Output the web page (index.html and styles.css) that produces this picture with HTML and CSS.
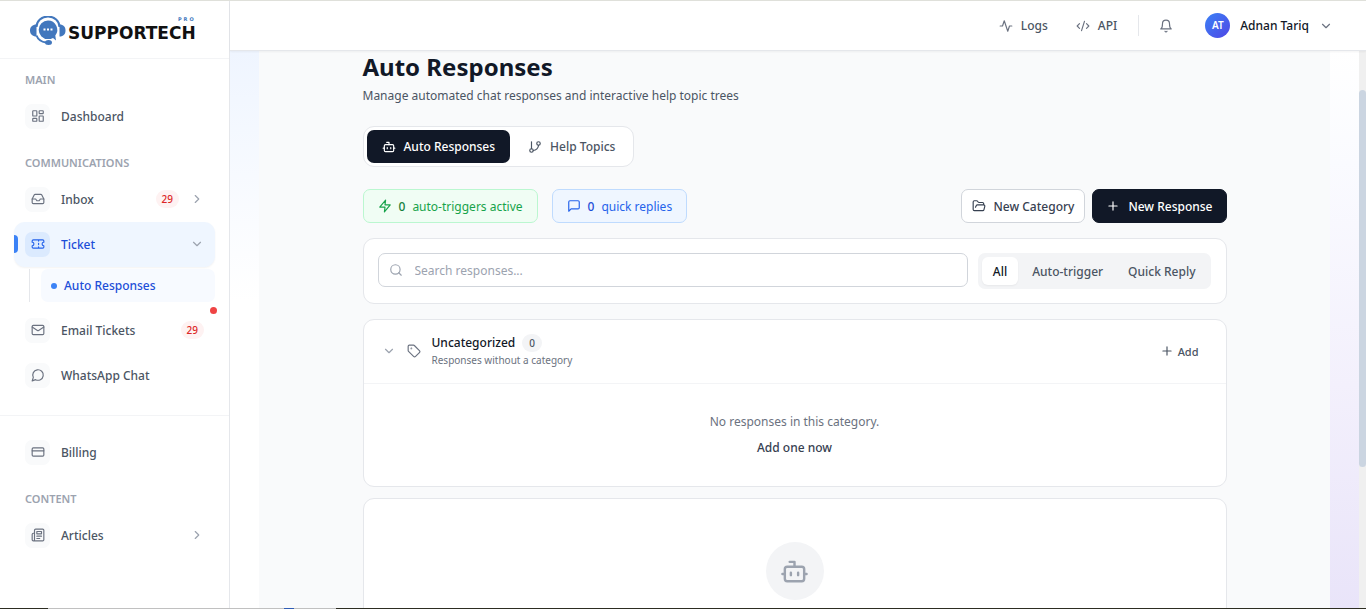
FILE: index.html
```
<!DOCTYPE html>
<html lang="en">
<head>
    <meta charset="UTF-8">
    <meta name="viewport" content="width=device-width, initial-scale=1.0">
    <title>Supportech Pro - Auto Responses</title>
    <link rel="stylesheet" href="styles.css">
</head>
<body>
    <div class="app">
        <aside class="sidebar">
            <a href="#" class="logo">
                <svg width="36" height="30" viewBox="0 0 36 30">
                    <path d="M6.500 11A11.500 10.500 0 0 1 29.500 11" fill="none" stroke="#4277bd" stroke-width="2"/>
                    <path d="M6.500 8.500C2.500 8.500 0 11 0 14.500s2.500 6 6.500 6zM29.500 8.500c4 0 6 2.500 6 6s-2 6-6 6z" fill="#4277bd"/>
                    <path d="M6.500 19.500C8 23.500 12 26 16 26.500" fill="none" stroke="#4277bd" stroke-width="2"/>
                    <ellipse cx="18.500" cy="26.500" rx="3.500" ry="2.500" fill="#4277bd"/>
                    <path d="M18 4.500a9.300 9.300 0 1 0 0 18.600c2 0 3.500-.400 5-1.200l3 2.600-.700-5A9.300 9.300 0 0 0 18 4.500z" fill="#4277bd"/>
                    <path d="M13.500 12.500h2v2h-2zM17 12.500h2v2h-2zM20.500 12.500h2v2h-2z" fill="#fff"/>
                </svg>
                <span class="logo-text">SUPPORTECH<small>PRO</small></span>
            </a>
            <nav class="menu">
                <h2>Main</h2>
                <a href="#" class="item">
                    <span class="icon"><svg class="i" viewBox="0 0 24 24"><rect x="3" y="3" width="7" height="9" rx="1"/><rect x="14" y="3" width="7" height="5" rx="1"/><rect x="14" y="12" width="7" height="9" rx="1"/><rect x="3" y="16" width="7" height="5" rx="1"/></svg></span>
                    <span class="label">Dashboard</span>
                </a>
                <h2>Communications</h2>
                <a href="#" class="item">
                    <span class="icon"><svg class="i" viewBox="0 0 24 24"><path d="M22 12h-6l-2 3h-4l-2-3H2"/><path d="M5.450 5.110 2 12v6a2 2 0 0 0 2 2h16a2 2 0 0 0 2-2v-6l-3.450-6.890A2 2 0 0 0 16.760 4H7.240a2 2 0 0 0-1.790 1.110z"/></svg></span>
                    <span class="label">Inbox</span>
                    <span class="count">29</span>
                    <svg class="i arrow" viewBox="0 0 24 24"><path d="m9 18 6-6-6-6"/></svg>
                </a>
                <a href="#" class="item active">
                    <span class="icon"><svg class="i" viewBox="0 0 24 24"><path d="M2 9a3 3 0 0 1 0 6v2a2 2 0 0 0 2 2h16a2 2 0 0 0 2-2v-2a3 3 0 0 1 0-6V7a2 2 0 0 0-2-2H4a2 2 0 0 0-2 2zM13 5v2M13 17v2M13 11v2"/></svg></span>
                    <span class="label">Ticket</span>
                    <svg class="i arrow" viewBox="0 0 24 24"><path d="m6 9 6 6 6-6"/></svg>
                </a>
                <div class="submenu">
                    <a href="#">Auto Responses</a>
                </div>
                <a href="#" class="item unread">
                    <span class="icon"><svg class="i" viewBox="0 0 24 24"><rect x="2" y="4" width="20" height="16" rx="2"/><path d="m22 7-8.970 5.700a1.940 1.940 0 0 1-2.060 0L2 7"/></svg></span>
                    <span class="label">Email Tickets</span>
                    <span class="count">29</span>
                </a>
                <a href="#" class="item">
                    <span class="icon"><svg class="i" viewBox="0 0 24 24"><path d="M7.900 20A9 9 0 1 0 4 16.100L2 22Z"/></svg></span>
                    <span class="label">WhatsApp Chat</span>
                </a>
            </nav>
            <nav class="menu menu-bottom">
                <a href="#" class="item">
                    <span class="icon"><svg class="i" viewBox="0 0 24 24"><rect x="2" y="5" width="20" height="14" rx="2"/><path d="M2 10h20"/></svg></span>
                    <span class="label">Billing</span>
                </a>
                <h2>Content</h2>
                <a href="#" class="item">
                    <span class="icon"><svg class="i" viewBox="0 0 24 24"><path d="M4 22h16a2 2 0 0 0 2-2V4a2 2 0 0 0-2-2H8a2 2 0 0 0-2 2v16a2 2 0 0 1-4 0v-9a2 2 0 0 1 2-2h2M18 14h-8M15 18h-5"/><path d="M10 6h8v4h-8z"/></svg></span>
                    <span class="label">Articles</span>
                    <svg class="i arrow" viewBox="0 0 24 24"><path d="m9 18 6-6-6-6"/></svg>
                </a>
            </nav>
        </aside>

        <div class="page">
            <header class="topbar">
                <a href="#" class="toplink"><svg class="i" viewBox="0 0 24 24"><path d="M22 12h-4l-3 9L9 3l-3 9H2"/></svg>Logs</a>
                <a href="#" class="toplink"><svg class="i" viewBox="0 0 24 24"><path d="m18 16 4-4-4-4M6 8l-4 4 4 4M14.500 4l-5 16"/></svg>API</a>
                <span class="divider"></span>
                <button class="bell" aria-label="Notifications"><svg class="i" viewBox="0 0 24 24"><path d="M6 8a6 6 0 0 1 12 0c0 7 3 9 3 9H3s3-2 3-9M10.300 21a1.940 1.940 0 0 0 3.400 0"/></svg></button>
                <button class="user">
                    <span class="avatar">AT</span>
                    Adnan Tariq
                    <svg class="i arrow" viewBox="0 0 24 24"><path d="m6 9 6 6 6-6"/></svg>
                </button>
            </header>

            <div class="scroller">
                <main>
                    <div class="content">
                        <h1>Auto Responses</h1>
                        <p class="lead">Manage automated chat responses and interactive help topic trees</p>

                        <div class="tabs">
                            <button class="tab selected"><svg class="i" viewBox="0 0 24 24"><path d="M12 8V4H8"/><rect x="4" y="8" width="16" height="12" rx="2"/><path d="M2 14h2M20 14h2M15 13v2M9 13v2"/></svg>Auto Responses</button>
                            <button class="tab"><svg class="i" viewBox="0 0 24 24"><path d="M6 3v12"/><circle cx="18" cy="6" r="3"/><circle cx="6" cy="18" r="3"/><path d="M18 9a9 9 0 0 1-9 9"/></svg>Help Topics</button>
                        </div>

                        <div class="actions">
                            <div class="stat green"><svg class="i" viewBox="0 0 24 24"><path d="M13 2 3 14h9l-1 8 10-12h-9z"/></svg><b>0</b>auto-triggers active</div>
                            <div class="stat blue"><svg class="i" viewBox="0 0 24 24"><path d="M21 15a2 2 0 0 1-2 2H7l-4 4V5a2 2 0 0 1 2-2h14a2 2 0 0 1 2 2z"/></svg><b>0</b>quick replies</div>
                            <button class="btn push"><svg class="i" viewBox="0 0 24 24"><path d="m6 14 1.450-2.900A2 2 0 0 1 9.240 10H20a2 2 0 0 1 1.940 2.500l-1.550 6a2 2 0 0 1-1.940 1.500H4a2 2 0 0 1-2-2V5c0-1.100.9-2 2-2h3.930a2 2 0 0 1 1.660.900l.820 1.200a2 2 0 0 0 1.660.900H18a2 2 0 0 1 2 2v2"/></svg>New Category</button>
                            <button class="btn dark"><svg class="i" viewBox="0 0 24 24"><path d="M5 12h14M12 5v14"/></svg>New Response</button>
                        </div>

                        <div class="card filters">
                            <div class="search">
                                <svg class="i" viewBox="0 0 24 24"><circle cx="11" cy="11" r="8"/><path d="m21 21-4.300-4.300"/></svg>
                                <input type="text" placeholder="Search responses..." aria-label="Search responses">
                            </div>
                            <div class="segments">
                                <button class="selected">All</button>
                                <button>Auto-trigger</button>
                                <button>Quick Reply</button>
                            </div>
                        </div>

                        <section class="card category">
                            <div class="category-head">
                                <svg class="i arrow" viewBox="0 0 24 24"><path d="m6 9 6 6 6-6"/></svg>
                                <svg class="i tag" viewBox="0 0 24 24"><path d="M12.590 2.590A2 2 0 0 0 11.170 2H4a2 2 0 0 0-2 2v7.170a2 2 0 0 0 .590 1.420l8.700 8.700a2.430 2.430 0 0 0 3.420 0l6.580-6.580a2.430 2.430 0 0 0 0-3.420z"/><circle cx="7.500" cy="7.500" r=".5"/></svg>
                                <div class="category-name">
                                    <h3>Uncategorized <span>0</span></h3>
                                    <p>Responses without a category</p>
                                </div>
                                <button class="add"><svg class="i" viewBox="0 0 24 24"><path d="M5 12h14M12 5v14"/></svg>Add</button>
                            </div>
                            <div class="empty">
                                <p>No responses in this category.</p>
                                <button>Add one now</button>
                            </div>
                        </section>

                        <section class="card intro">
                            <span class="circle"><svg class="i" viewBox="0 0 24 24"><path d="M12 8V4H8"/><rect x="4" y="8" width="16" height="12" rx="2"/><path d="M2 14h2M20 14h2M15 13v2M9 13v2"/></svg></span>
                        </section>
                    </div>
                </main>
                <div class="scrollbar"><div class="thumb"></div></div>
            </div>
        </div>
    </div>
    <div class="edge"><span></span></div>
</body>
</html>
```
FILE: styles.css
```
* {
    box-sizing: border-box;
}

body {
    font-family: "Noto Sans", "Open Sans", sans-serif;
    font-size: 12px;
    line-height: 19px;
    margin: 0;
    height: 100vh;
    display: flex;
    flex-direction: column;
    overflow: hidden;
    color: #4b5563;
    background: #fff;
    border-top: 1px solid #dfe0da;
}

h1, h2, h3, p {
    margin: 0;
}

a {
    color: inherit;
    text-decoration: none;
}

button, input {
    font: inherit;
    color: inherit;
}

button {
    display: flex;
    align-items: center;
    justify-content: center;
    padding: 0;
    border: none;
    background: none;
    white-space: nowrap;
    cursor: pointer;
}

.i {
    width: 14px;
    height: 14px;
    flex: none;
    fill: none;
    stroke: currentColor;
    stroke-width: 2;
    stroke-linecap: round;
    stroke-linejoin: round;
}

.arrow {
    color: #9ca3af;
}

.app {
    flex: 1;
    min-height: 0;
    display: flex;
}

/* Sidebar */
.sidebar {
    width: 230px;
    flex: none;
    border-right: 1px solid #e5e7eb;
    overflow: hidden;
}

.logo {
    display: flex;
    align-items: center;
    gap: 2px;
    height: 58px;
    padding: 2px 0 0 30px;
    border-bottom: 1px solid #f3f4f6;
}

.logo-text {
    position: relative;
    font: bold 17px "DejaVu Sans", sans-serif;
    color: #111;
    padding-top: 4px;
}

.logo-text small {
    position: absolute;
    right: 0;
    top: -3px;
    font-size: 5px;
    letter-spacing: 2px;
    color: #4277bd;
}

.menu {
    padding: 0 14px;
}

.menu h2 {
    font-size: 11px;
    font-weight: 600;
    line-height: 18px;
    padding: 15px 11px 5px;
    color: #9ca3af;
    text-transform: uppercase;
}

.menu h2:first-child {
    padding-top: 12px;
}

.menu-bottom {
    margin-top: 17px;
    padding-top: 14px;
    border-top: 1px solid #f3f4f6;
}

.item {
    position: relative;
    display: flex;
    align-items: center;
    height: 45px;
    padding: 0 11px 1px;
    border-radius: 11px;
    font-weight: 500;
}

.icon {
    width: 25px;
    height: 25px;
    display: flex;
    align-items: center;
    justify-content: center;
    margin-right: 11px;
    border-radius: 7px;
    background: #f9fafb;
    color: #6b7280;
}

.label {
    flex: 1;
}

.count {
    padding: 0 6px;
    border-radius: 9px;
    background: #fef2f2;
    color: #dc2626;
    font-size: 10px;
    line-height: 18px;
}

.item .arrow {
    margin-left: 11px;
}

.item.active {
    background: #eff6ff;
    color: #1d4ed8;
    box-shadow: 0 1px 2px rgba(0, 0, 0, 0.05);
}

.item.active .icon {
    background: #dbeafe;
    color: #2563eb;
}

.item.active::before {
    content: "";
    position: absolute;
    left: 0;
    top: 13px;
    width: 4px;
    height: 18px;
    border-radius: 0 4px 4px 0;
    background: #3b82f6;
}

.item.unread::after {
    content: "";
    position: absolute;
    right: -2px;
    top: -1px;
    width: 7px;
    height: 7px;
    border-radius: 50%;
    background: #ef4444;
}

.submenu {
    margin: 2px 0 6px 15px;
    padding-left: 11px;
    border-left: 1px solid #e5e7eb;
}

.submenu a {
    display: flex;
    align-items: center;
    gap: 7px;
    height: 33px;
    padding: 0 10px;
    border-radius: 7px;
    background: #f7faff;
    color: #1d4ed8;
    font-weight: 500;
}

.submenu a::before {
    content: "";
    width: 6px;
    height: 6px;
    border-radius: 50%;
    background: #3b82f6;
}

/* Top bar */
.page {
    flex: 1;
    min-width: 0;
    display: flex;
    flex-direction: column;
}

.topbar {
    position: relative;
    flex: none;
    display: flex;
    align-items: center;
    justify-content: flex-end;
    height: 50px;
    padding-right: 33px;
    border-bottom: 1px solid #e5e7eb;
    box-shadow: 0 1px 2px rgba(0, 0, 0, 0.05);
    font-weight: 500;
}

.topbar .i {
    color: #6b7280;
}

.toplink {
    display: flex;
    align-items: center;
    gap: 8px;
    margin-right: 28px;
}

.divider {
    width: 1px;
    height: 21px;
    margin-left: -7px;
    background: #e5e7eb;
}

.bell {
    margin: 0 32px 0 20px;
}

.user {
    color: #111827;
    font-weight: 500;
    gap: 10px;
}

.avatar {
    width: 25px;
    height: 25px;
    line-height: 25px;
    border-radius: 50%;
    background: linear-gradient(135deg, #3b82f6, #4f46e5);
    color: #fff;
    font-size: 10px;
    font-weight: 600;
}

/* Content */
.scroller {
    flex: 1;
    min-height: 0;
    display: flex;
    overflow: hidden;
    background: linear-gradient(#eff5ff, #fff 45%);
}

main {
    flex: 1;
    padding: 0 29px;
    background: linear-gradient(#fff, #fafbff 20%, #f3f0fc 60%, #e9e4f9) right / 29px 100% no-repeat;
}

.content {
    min-height: 100%;
    padding: 0 calc((100% - 864px) / 2);
    background: #f9fafb;
}

.scrollbar {
    width: 7px;
    padding-top: 39px;
    background: #f0f0f0;
}

.thumb {
    height: 377px;
    border-radius: 4px;
    background: #cbd5e1;
}

h1 {
    font-size: 24px;
    line-height: 32px;
    color: #111827;
}

.lead {
    padding-top: 3px;
}

.tabs {
    display: flex;
    width: fit-content;
    margin-top: 21px;
    padding: 3px;
    border: 1px solid #e5e7eb;
    border-radius: 11px;
    background: #fff;
}

.tab {
    gap: 8px;
    height: 33px;
    padding: 0 15px;
    border-radius: 7px;
    font-weight: 500;
}

.tab + .tab {
    padding-left: 18px;
}

.tab.selected {
    background: #111827;
    color: #fff;
}

.actions {
    display: flex;
    margin-top: 22px;
}

.stat {
    display: flex;
    align-items: center;
    gap: 7px;
    height: 34px;
    margin-right: 14px;
    padding: 0 14px;
    border: 1px solid;
    border-radius: 7px;
}

.stat b {
    font-weight: 500;
}

.green {
    background: #f0fdf4;
    border-color: #bbf7d0;
    color: #16a34a;
}

.green b {
    color: #15803d;
}

.blue {
    background: #eff6ff;
    border-color: #bfdbfe;
    color: #2563eb;
}

.blue b {
    color: #1d4ed8;
}

.btn {
    gap: 7px;
    height: 34px;
    padding: 0 10px;
    border: 1px solid #d1d5db;
    border-radius: 7px;
    background: #fff;
    color: #374151;
    font-weight: 500;
}

.push {
    margin: 0 7px 0 auto;
}

.btn.dark {
    gap: 8px;
    padding: 0 13px;
    background: #111827;
    border-color: #111827;
    color: #fff;
}

.card {
    border: 1px solid #e5e7eb;
    border-radius: 11px;
    background: #fff;
}

.filters {
    display: flex;
    gap: 10px;
    margin: 15px 0;
    padding: 14px 15px 14px 14px;
}

.search {
    position: relative;
    flex: 1;
}

.search .i {
    position: absolute;
    left: 11px;
    top: 10px;
    color: #9ca3af;
}

.search input {
    display: block;
    width: 100%;
    height: 34px;
    padding: 0 36px;
    border: 1px solid #d1d5db;
    border-radius: 7px;
    background: #fff;
}

.search input::placeholder {
    color: #9ca3af;
}

.segments {
    display: flex;
    padding: 4px;
    border-radius: 7px;
    background: #f3f4f6;
}

.segments button {
    height: 28px;
    padding: 0 11px;
    margin-right: 3px;
    border-radius: 6px;
    font-weight: 500;
}

.segments button:last-child {
    margin-right: 0;
}

.segments .selected {
    background: #fff;
    color: #111827;
    box-shadow: 0 1px 2px rgba(0, 0, 0, 0.05);
}

.category-head {
    display: flex;
    align-items: center;
    height: 64px;
    padding: 0 27px 1px 18px;
    border-bottom: 1px solid #f3f4f6;
}

.tag {
    margin: 0 11px;
    color: #6b7280;
}

.category-name {
    flex: 1;
}

.category-name h3 {
    display: flex;
    align-items: center;
    gap: 7px;
    font-size: 12px;
    font-weight: 500;
    color: #111827;
}

.category-name span {
    padding: 0 7px;
    border-radius: 9px;
    background: #f3f4f6;
    color: #4b5563;
    font-size: 10px;
    line-height: 18px;
}

.category-name p {
    font-size: 10px;
    line-height: 17px;
    color: #6b7280;
}

.add {
    gap: 4px;
    font-size: 11px;
    font-weight: 500;
}

.empty {
    display: flex;
    flex-direction: column;
    align-items: center;
    gap: 7px;
    padding: 28px 0 29px;
    color: #6b7280;
}

.empty button {
    color: #374151;
    font-weight: 500;
}

.intro {
    display: flex;
    justify-content: center;
    height: 180px;
    margin-top: 11px;
    padding-top: 43px;
}

.circle {
    display: flex;
    align-items: center;
    justify-content: center;
    width: 58px;
    height: 58px;
    border-radius: 50%;
    background: #f3f4f6;
    color: #9ca3af;
}

.circle .i {
    width: 29px;
    height: 29px;
}

/* Window edge along the bottom */
.edge {
    flex: none;
    display: flex;
    height: 1px;
    padding-left: 48px;
    background: #2d2d22;
}

.edge span {
    width: 288px;
    background: linear-gradient(90deg, #c0c0c0 236px, #2f5cb5 236px, #2f5cb5 246px, #c0c0c0 246px);
}
```
